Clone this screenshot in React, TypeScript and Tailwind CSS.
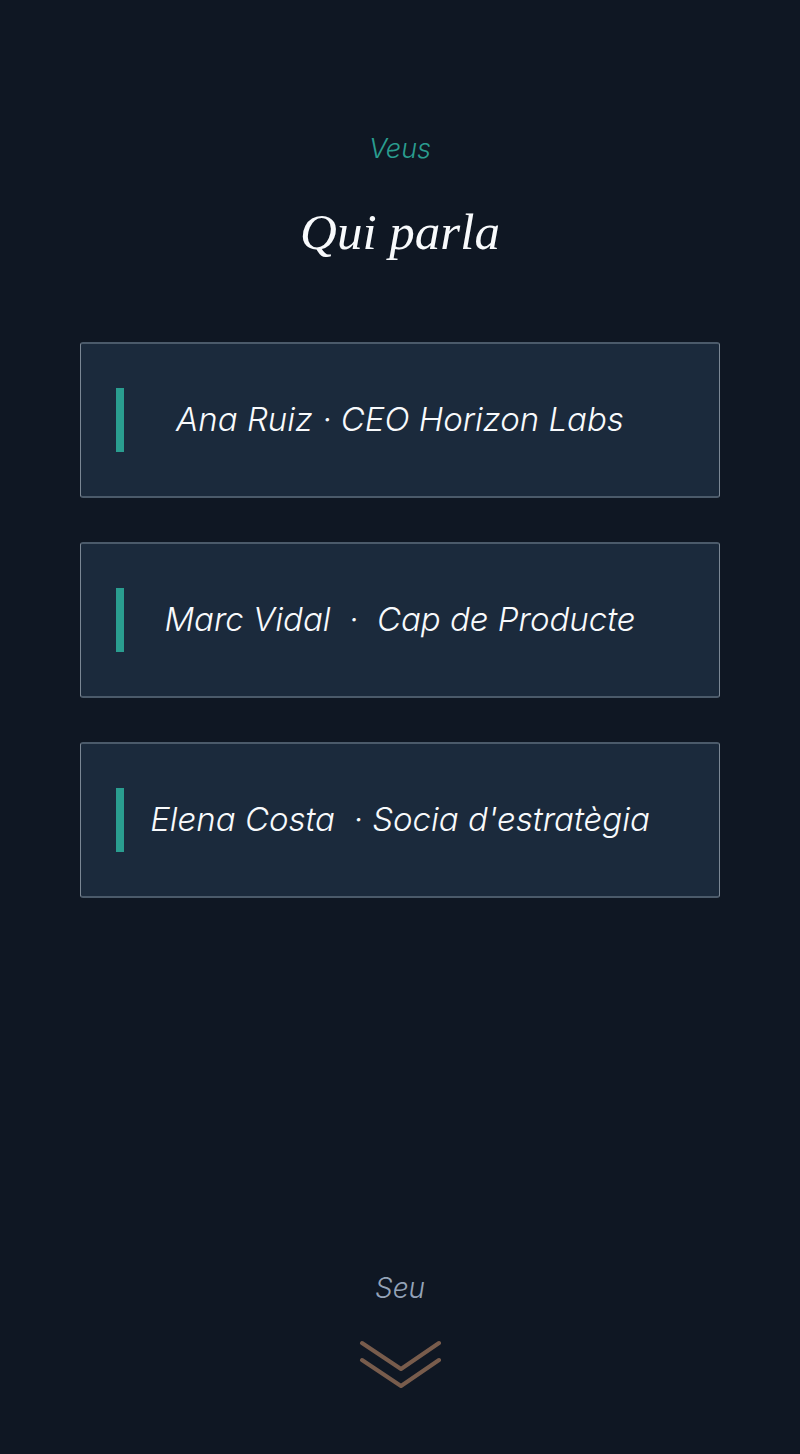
const speakers = [
  "Ana Ruiz · CEO Horizon Labs",
  "Marc Vidal  ·  Cap de Producte",
  "Elena Costa  · Socia d'estratègia",
];

function Speaker({ text }: { text: string }) {
  return (
    <li className="relative flex h-39 items-center justify-center rounded-[3px] border-x border-y-2 border-x-[#7b8794] border-y-[#4b5a6a] bg-[#1b2a3c] px-16 pb-0.5">
      <span className="absolute left-[35px] top-11 h-16 w-2 bg-[#2a9d8f]" aria-hidden="true" />
      <span className="whitespace-pre text-[33px] leading-10 text-[#f8fafc]">{text}</span>
    </li>
  );
}

export default function App() {
  return (
    <main className="flex min-h-screen flex-col items-center bg-[#0f1723] px-20 pt-[129px] pb-16 font-[Inter,sans-serif] font-light italic">
      <p className="text-[27px] leading-10 text-[#2a9d8f]">Veus</p>
      <h1 className="mt-[31px] font-['Liberation_Serif',serif] text-[51px] leading-16 font-normal text-[#f8fafc]">
        Qui parla
      </h1>
      <ul className="mt-[78px] flex w-full flex-col gap-11">
        {speakers.map((text) => (
          <Speaker key={text} text={text} />
        ))}
      </ul>
      <footer className="mt-auto flex flex-col items-center gap-8">
        <p className="text-[28px] leading-10 text-[#94a3b8]">Seu</p>
        <svg
          className="h-[50px] w-[82px]"
          viewBox="0 0 82 50"
          fill="none"
          stroke="#785c4c"
          strokeWidth="4"
          strokeLinecap="round"
          strokeLinejoin="round"
          aria-hidden="true"
        >
          <path d="M3 3 42 29 80 3M3 20 42 46 80 20" />
        </svg>
      </footer>
    </main>
  );
}
